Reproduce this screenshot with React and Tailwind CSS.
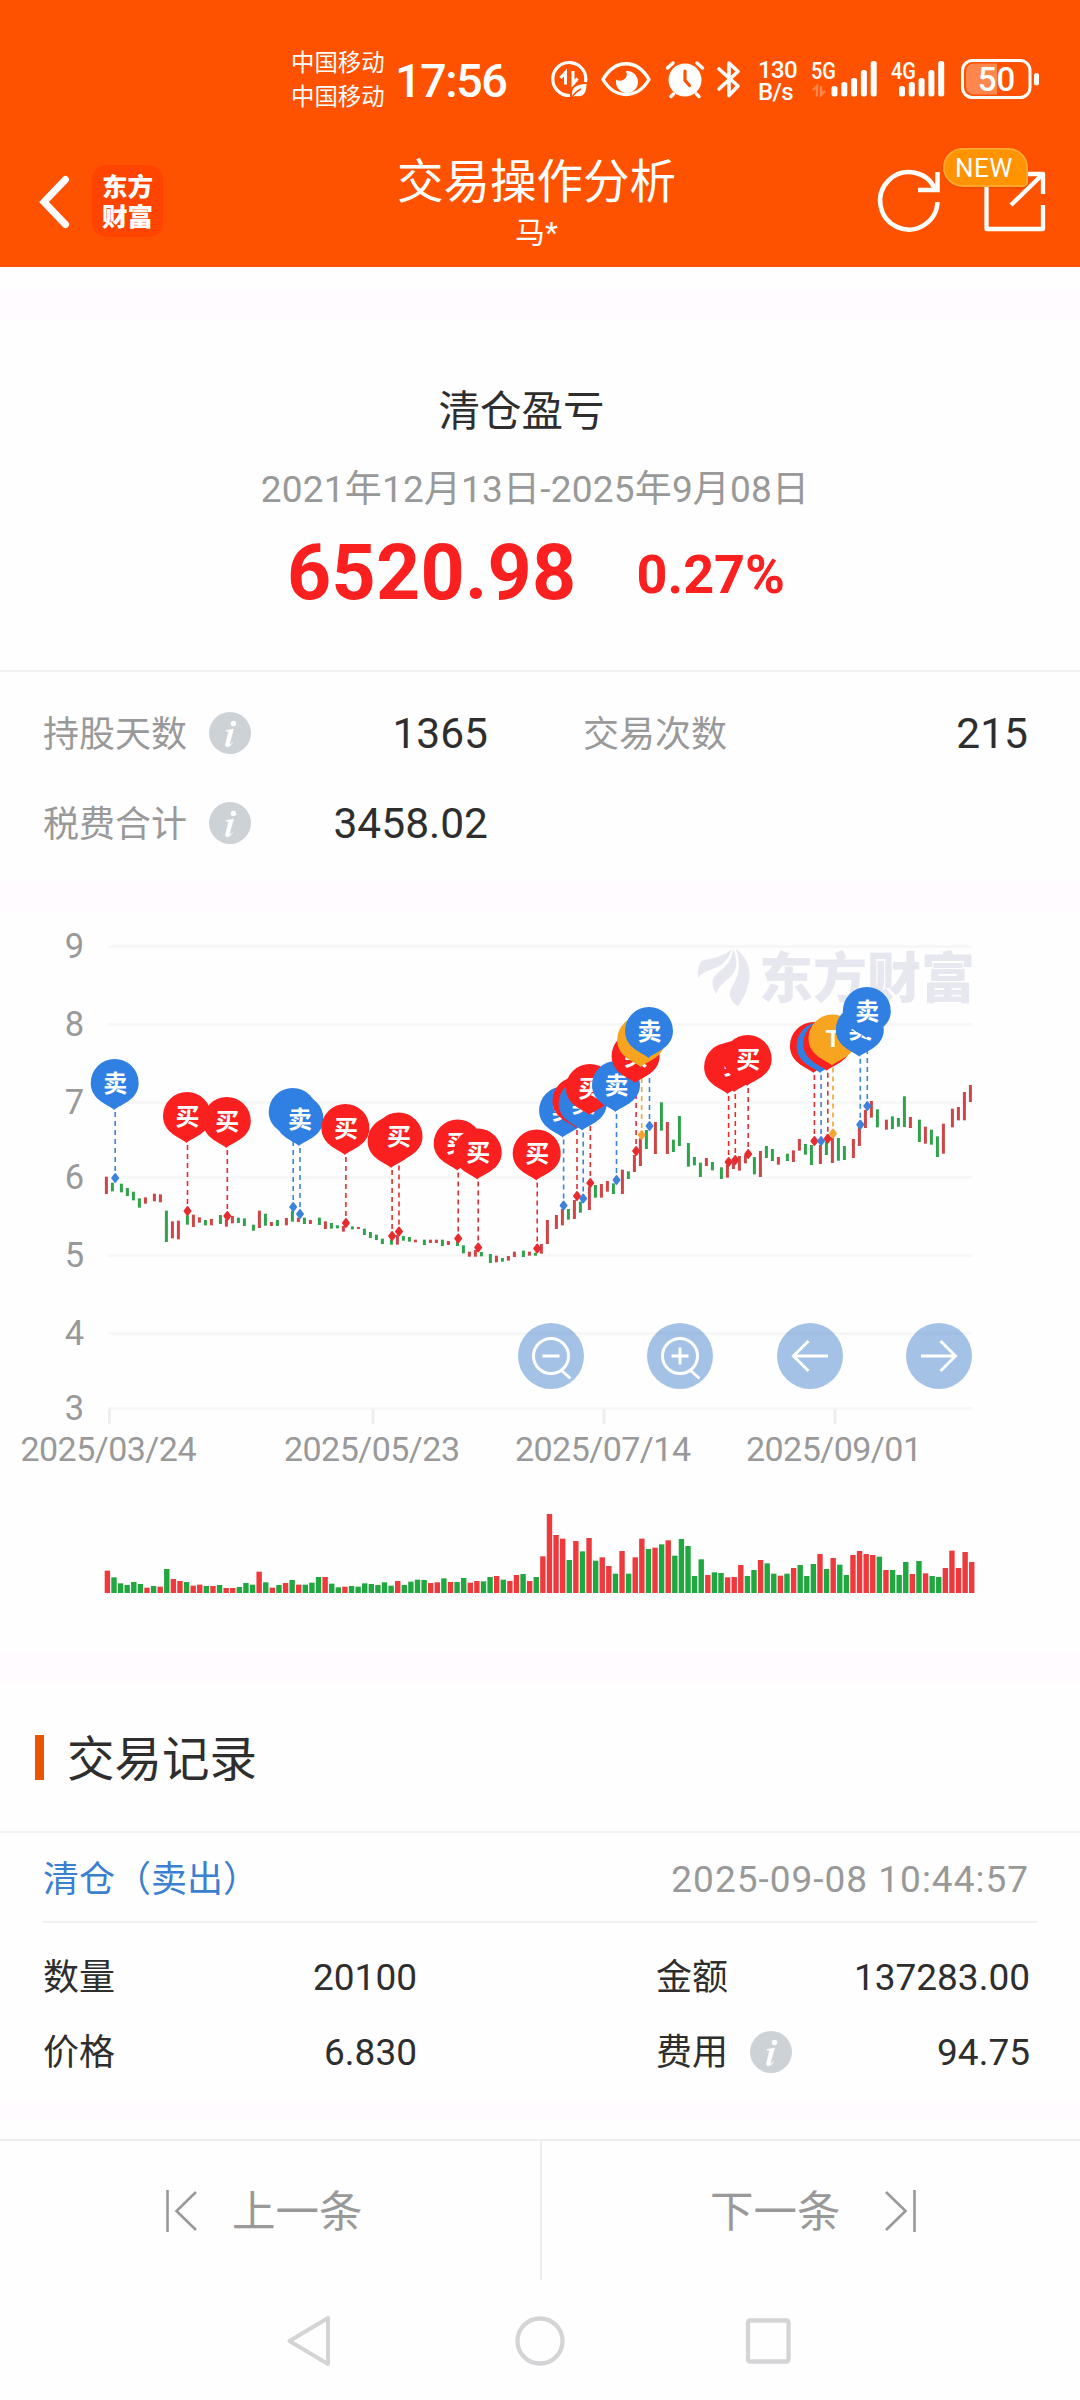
import React from "react";

// candle body [top, bottom] in chart units (1/3 px), "r" = up, "g" = down
const candles = [
  ["r", 830, 882], ["g", 848, 874], ["g", 851, 877], ["g", 864, 888], ["g", 875, 901],
  ["g", 895, 923], ["r", 892, 911], ["r", 881, 904], ["r", 883, 907], ["g", 932, 1026],
  ["r", 964, 1015], ["r", 962, 1018], ["g", 946, 974], ["r", 944, 981], ["r", 952, 968],
  ["g", 960, 976], ["r", 957, 976], ["g", 945, 972], ["r", 958, 980], ["r", 948, 970],
  ["g", 953, 969], ["g", 955, 978], ["g", 974, 992], ["r", 932, 984], ["g", 941, 977],
  ["r", 966, 978], ["g", 960, 978], ["r", 954, 976], ["g", 933, 965], ["r", 953, 966],
  ["g", 953, 972], ["r", 960, 972], ["g", 953, 975], ["r", 964, 987], ["g", 969, 986],
  ["g", 976, 985], ["r", 978, 995], ["g", 979, 988], ["r", 981, 987], ["g", 986, 1005],
  ["g", 996, 1014], ["g", 1004, 1020], ["g", 1016, 1032], ["g", 1018, 1034], ["r", 1005, 1034],
  ["g", 1008, 1022], ["g", 1011, 1025], ["r", 1019, 1027], ["g", 1019, 1035], ["r", 1019, 1029],
  ["r", 1019, 1029], ["g", 1019, 1038], ["r", 1023, 1035], ["g", 1025, 1038], ["g", 1036, 1060],
  ["r", 1055, 1070], ["r", 1050, 1070], ["g", 1056, 1069], ["g", 1062, 1089], ["r", 1067, 1087],
  ["g", 1074, 1085], ["r", 1068, 1082], ["r", 1055, 1071], ["g", 1052, 1071], ["r", 1055, 1067],
  ["g", 1058, 1067], ["r", 1032, 1061], ["r", 960, 1032], ["r", 945, 987], ["r", 927, 976],
  ["g", 927, 959], ["r", 900, 957], ["g", 905, 938], ["r", 860, 930], ["g", 855, 893],
  ["r", 852, 893], ["r", 843, 875], ["g", 850, 882], ["r", 809, 882], ["g", 814, 837],
  ["r", 765, 816], ["r", 715, 798], ["g", 690, 747], ["r", 666, 762], ["g", 607, 692],
  ["r", 666, 762], ["g", 719, 756], ["g", 648, 738], ["g", 729, 800], ["g", 771, 796],
  ["g", 788, 831], ["r", 774, 798], ["g", 786, 811], ["g", 802, 837], ["r", 795, 833],
  ["r", 785, 807], ["r", 768, 812], ["r", 765, 790], ["g", 771, 823], ["r", 753, 831],
  ["g", 738, 774], ["g", 747, 783], ["r", 771, 794], ["g", 761, 783], ["r", 751, 786],
  ["r", 717, 752], ["g", 732, 764], ["g", 735, 795], ["r", 735, 792], ["g", 725, 765],
  ["r", 712, 789], ["g", 714, 782], ["g", 738, 780], ["r", 717, 774], ["r", 680, 738],
  ["r", 630, 684], ["r", 603, 653], ["g", 628, 682], ["r", 659, 689], ["g", 649, 687],
  ["g", 654, 680], ["g", 589, 681], ["r", 651, 684], ["g", 659, 726], ["r", 680, 731],
  ["g", 689, 734], ["g", 709, 771], ["r", 671, 761], ["r", 626, 682], ["r", 621, 661],
  ["r", 576, 661], ["r", 555, 606],
];

// positive = up day, negative = down day
const volumes = [
  67, -47, -29, -24, -33, -27, 16, -21, 19, -72, 42, 36, -33, 22, 25, -21, 21, -24, 15, 15,
  -18, -30, -25, 64, -32, 16, -24, 30, -39, 25, -25, -31, -48, 48, -28, -17, 19, -21, -19, -29,
  -27, -24, -32, -22, 36, -24, -34, -40, -39, 30, 32, -44, 33, -33, -45, 31, 36, -35, -48, 51,
  -40, 36, 54, -57, 36, -48, 110, 237, 174, 163, -99, 156, -125, 165, -97, 107, 81, -58, 126, -58,
  107, 163, -132, 136, -146, 158, -112, -162, -141, -51, -101, 54, -62, -60, 47, 48, 84, -51, -69, 99,
  -89, -58, 52, -58, 75, -84, -51, -87, 117, -72, 105, -85, -54, 114, 126, 117, 114, -109, 69, -69,
  -54, -93, 57, -96, 59, -51, -48, 75, 127, 75, 123, 93,
];

// [kind, x, y of the dot]
const trades = [
  ["卖", 115.2, 1178], ["买", 187.5, 1211], ["买", 227.3, 1216], ["卖", 293.2, 1207],
  ["卖", 300, 1214], ["买", 345.9, 1223], ["买", 392.1, 1236], ["买", 399, 1231.5],
  ["买", 458.2, 1238.5], ["买", 478.2, 1247.5], ["买", 537.2, 1248.5], ["卖", 563.6, 1205.5],
  ["买", 577, 1196], ["卖", 583.2, 1198.5], ["买", 590.3, 1183], ["卖", 616.5, 1180],
  ["买", 636.1, 1151], ["T", 641.7, 1135], ["卖", 649.5, 1126], ["买", 728.6, 1162],
  ["买", 735.3, 1160], ["买", 748.2, 1154], ["买", 814.4, 1141], ["卖", 821.1, 1141],
  ["买", 827.8, 1138.7], ["T", 833, 1133.5], ["卖", 860.3, 1124.7], ["卖", 867.3, 1106],
];

const tradeColors = { 买: "#fa2020", 卖: "#3080e3", T: "#f7a521" };
const dotColors = { 买: "#e62c2e", 卖: "#3d83dc", T: "#f2a531" };

const gridLines = [
  [9, 946.5], [8, 1024.5], [7, 1102.5], [6, 1177.5], [5, 1255.5], [4, 1333.5], [3, 1408.5],
];

const dates = [
  ["2025/03/24", 108.5], ["2025/05/23", 372], ["2025/07/14", 603], ["2025/09/01", 834],
];

const Signal = ({ label, faint }) => (
  <svg viewBox="0 0 66 40" className="w-[66px] h-10" fill="#fff">
    <text x="0" y="19.5" fontSize="23" fontWeight="500" textLength="25" lengthAdjust="spacingAndGlyphs">
      {label}
    </text>
    {faint && (
      <path d="M2 31l4-4v10.500M10 27v9l4-4" stroke="#fff" strokeWidth="2.400" fill="none" opacity=".3" />
    )}
    {[26, 22, 18, 10, 1].map((y, i) => (
      <rect key={y} x={(faint ? 20.5 : 8) + i * 9.8} y={y + 1} width="6" height={36.5 - y} rx="2.500" />
    ))}
  </svg>
);

const StatusBar = () => (
  <div className="flex items-start h-[140px] pt-[59px] pl-[291px] text-white">
    <div className="w-[94px] -mt-[13px] text-[23.4px] leading-[34px] whitespace-nowrap">
      <div>中国移动</div>
      <div>中国移动</div>
    </div>
    <div className="w-[120px] ml-[10px] mt-px text-[47px] leading-[42px] font-medium tracking-[-1.6px]">17:56</div>
    <svg viewBox="0 0 40 40" className="w-10 h-10 ml-[35px]" fill="none" stroke="#fff" strokeWidth="3.200">
      <path d="M20 36.500A16.500 16.500 0 1 1 35.500 23" />
      <path d="M10.500 19l5-5.500v12M27.500 19.500l-4 5-.5.500V12" strokeWidth="3" />
      <path d="M22.500 38c-2-9 3-12.500 14-13 0 9-3 13.500-11 12z" fill="#fff" stroke="none" />
      <path d="M22 38.500c2-4 5-6.500 9-8.500" strokeWidth="1.500" stroke="#ff5200" />
    </svg>
    <svg viewBox="0 0 50 40" className="w-[50px] h-10 ml-[11px]" fill="none">
      <circle cx="26" cy="23" r="11" fill="#fff" />
      <circle cx="19" cy="15" r="6.800" fill="#ff5200" />
      <path d="M2 20.500C14-.5 36-.5 48 20.500 36 40.500 14 40.500 2 20.500z" stroke="#fff" strokeWidth="3.400" strokeLinejoin="round" />
    </svg>
    <svg viewBox="0 0 40 40" className="w-10 h-10 ml-[14px]" fill="none" stroke="#fff" strokeLinecap="round">
      <circle cx="20" cy="21" r="16.500" fill="#fff" stroke="none" />
      <path d="M2.500 9L8 4M37.500 9L32 4M8.500 35L6 37.500M31.500 35l2.500 2.500" strokeWidth="3.500" />
      <path d="M20 12v9.500l4.500 5" stroke="#ff5200" strokeWidth="3.200" />
    </svg>
    <svg viewBox="0 0 26 40" className="w-[26px] h-10 ml-[11px]" fill="none" stroke="#fff" strokeWidth="3.600" strokeLinejoin="round" strokeLinecap="round">
      <path d="M3 10l19 17-9 9.500V4l9 8.500L3 30" />
    </svg>
    <div className="w-[40px] ml-[16px] text-[24px] leading-[22px] font-medium tracking-[-0.6px]">
      <div>130</div>
      <div>B/s</div>
    </div>
    <div className="ml-[13px]">
      <Signal label="5G" faint />
    </div>
    <div className="ml-[14px]">
      <Signal label="4G" />
    </div>
    <svg viewBox="0 0 80 40" className="w-20 h-10 ml-[4px]" fill="#fff">
      <rect x="1.500" y="1.500" width="67.500" height="37" rx="10" fill="none" stroke="#fff" strokeWidth="3" />
      <path d="M36 4.500H13c-5 0-8 3-8 8v15c0 5 3 8 8 8h23z" opacity=".3" />
      <rect x="73" y="14" width="5" height="12.500" rx="2.500" />
      <text x="35.500" y="32" fontSize="33" fontWeight="500" textAnchor="middle">50</text>
    </svg>
  </div>
);

const TitleBar = () => (
  <div className="relative flex h-[127px] pl-[36px] text-white">
    <div className="flex w-[350px] pt-[25px]">
      <svg viewBox="0 0 40 72" className="w-10 h-[72px]" fill="none" stroke="#fff" strokeWidth="7" strokeLinecap="round" strokeLinejoin="miter">
        <path d="M29.500 14.500L8 37l21.500 22.500" />
      </svg>
      <div className="w-[71px] h-[72px] ml-[16px] pt-[7px] rounded-[14px] bg-[#ff4400] text-center text-[25.500px] leading-[30px] font-black">
        <div>东方</div>
        <div>财富</div>
      </div>
    </div>
    <div className="w-[301px] text-center whitespace-nowrap">
      <div className="mt-[14px] text-[46.500px] leading-[56px]">交易操作分析</div>
      <div className="mt-[5px] text-[30px] leading-[36px]">马*</div>
    </div>
    <div className="relative flex ml-[188px] pt-[26px]">
      <svg viewBox="0 0 68 70" className="w-[68px] h-[70px]" fill="none" stroke="#fff" strokeWidth="4.500">
        <path d="M62.500 36A28.700 28.700 0 1 1 60 23" />
        <path d="M43 24h19.500V6" />
      </svg>
      <svg viewBox="0 0 68 70" className="w-[68px] h-[70px] ml-[35px]" fill="none" stroke="#fff" strokeWidth="4.300" strokeLinejoin="round">
        <path d="M65 28V8H8.500v55H65V39M65 8L33 39" />
      </svg>
      <div className="absolute left-[68px] top-[8px] w-[85px] h-[39px] rounded-[20px] rounded-br-[5px] border-2 border-[#ffa62e] bg-[#ff9300] pr-[3px] text-center text-[26px] leading-[36px] tracking-[0.5px] shadow-sm">
        NEW
      </div>
    </div>
  </div>
);

const InfoIcon = () => (
  <svg viewBox="0 0 42 42" className="w-[42px] h-[42px] ml-[22px]">
    <circle cx="21" cy="21" r="21" fill="#cdd2d6" />
    <circle cx="24.500" cy="11.500" r="2.700" fill="#fff" />
    <path d="M17 18.500c3-.5 5-1 7.500-1.500l-4 14.500c-.5 2 1 1.500 3-1 -2 4.500-7.500 6-7 2l3-12c.3-1.500-1-1.300-2.500-1.300z" fill="#fff" stroke="#fff" strokeWidth=".6" />
  </svg>
);

const Stat = ({ label, value, info, className }) => (
  <div className={`flex items-center h-[60px] ${className}`}>
    <span className="pt-1 text-[36px] text-[#999]">{label}</span>
    {info && <InfoIcon />}
    <span className="ml-auto pt-px text-[42.500px]">{value}</span>
  </div>
);

const Field = ({ label, value, info, className }) => (
  <div className={`flex items-center h-[60px] text-[36px] ${className}`}>
    <span className="pt-[2px]">{label}</span>
    {info && <InfoIcon />}
    <span className="ml-auto pt-[2px] text-[37px]">{value}</span>
  </div>
);

const Pin = ({ kind, x, y }) => (
  <g transform={`translate(${x} ${y})`}>
    <path d="M-1 51C-5 46-24.500 42-24.500 24A24 24 0 0 1 23.500 24C23.500 42 3 46-1 51z" fill={tradeColors[kind]} />
    <text y="32.500" fontSize="24" fontWeight="700" fill="#fff" textAnchor="middle">
      {kind}
    </text>
  </g>
);

const RoundButton = ({ x, children }) => (
  <g transform={`translate(${x} 1356)`} fill="none" stroke="#fff" strokeWidth="3">
    <circle r="33" fill="#2d73c8" fillOpacity=".43" stroke="none" />
    {children}
  </g>
);

const Chart = () => (
  <svg viewBox="0 912 1080 740" className="w-[1080px] h-[740px]">
    {gridLines.map(([value, y]) => (
      <g key={value}>
        <rect x="108" y={y - 1.5} width="864" height="3" fill="#f7f7f7" />
        <text x="74.500" y={y + 11} fontSize="34.500" fill="#999" textAnchor="middle">
          {value}
        </text>
      </g>
    ))}
    {dates.map(([date, x]) => (
      <g key={date}>
        <rect x={x - 0.5} y="1409" width="3" height="15" fill="#eee" />
        <text x={x} y="1461" fontSize="34" fill="#999" textAnchor="middle" textLength="176">
          {date}
        </text>
      </g>
    ))}

    <g fill="#e7e7ef">
      <path d="M698 978c-1-9 1-16 6-18 12-2 22-5 28-11-4 11-9 16-17 19-7 3-13 4-17 10z" />
      <path d="M716 994c-5-10-5-16 3-22 9-7 13-13 14-23 6 14 4 22-4 29-6 5-11 9-13 16z" />
      <path d="M738 1006c-8-5-11-12-5-21 6-10 8-21 3-36 12 9 16 22 12 36-2 9-6 15-10 21z" />
      <text x="759" y="998" fontSize="54" fontWeight="900" textLength="216">
        东方财富
      </text>
    </g>

    {candles.map(([dir, top, bottom], i) => (
      <rect
        key={i}
        x={104.9 + 3 * Math.floor(i * 2.1987 + 0.65)}
        y={900 + top / 3}
        width="3"
        height={(bottom - top) / 3}
        fill={dir === "r" ? "#cf4548" : "#2fa24c"}
      />
    ))}

    {trades.map(([kind, x, y], i) => (
      <g key={i} fill={dotColors[kind]} stroke={dotColors[kind]}>
        <path d={`M${x} ${y - 66}V${y}`} strokeWidth="1.600" strokeDasharray="5 4" />
        <path d={`M${x} ${y - 4}l3 4-3 4-3-4z`} strokeWidth="2" strokeLinejoin="round" />
      </g>
    ))}
    {trades.map(([kind, x, y], i) => (
      <Pin key={i} kind={kind} x={x} y={y - 119} />
    ))}

    <RoundButton x={551}>
      <circle r="17.500" />
      <path d="M-8.500 0h17M10.500 14.500l9 8" />
    </RoundButton>
    <RoundButton x={680}>
      <circle r="17.500" />
      <path d="M-8.500 0h17M0-8.500v17M10.500 14.500l9 8" />
    </RoundButton>
    <RoundButton x={810}>
      <path d="M18 0h-34M-1.500-15L-16.500 0l15 15" />
    </RoundButton>
    <RoundButton x={939}>
      <path d="M-18 0h34M1.500-15L16.500 0l-15 15" />
    </RoundButton>

    {volumes.map((v, i) => (
      <rect
        key={i}
        x={104.7 + i * 6.598}
        y={1593 - Math.abs(v) / 3}
        width="5.400"
        height={Math.abs(v) / 3}
        fill={v > 0 ? "#ee3a3c" : "#21a73f"}
      />
    ))}
  </svg>
);

const App = () => {
  return (
    <div className="flex flex-col w-[1080px] h-[2400px] overflow-hidden bg-[#fefefe] text-[#2e2e2e] font-[Roboto,'Noto_Sans_CJK_SC',sans-serif]">
      <header className="h-[267px] bg-[#ff5200]">
        <StatusBar />
        <TitleBar />
      </header>
      <div className="h-[31px] mt-[23px] bg-[#fffbff]" />

      <section className="h-[351px] pt-[61px] border-b-2 border-[#f1f1f1] text-center">
        <div className="h-[60px] pr-[37px] text-[41.500px] leading-[60px]">清仓盈亏</div>
        <div className="h-[60px] mt-[18px] pr-[10px] text-[37px] leading-[60px] tracking-[0.2px] text-[#999]">
          2021年12月13日-2025年9月08日
        </div>
        <div className="flex justify-center items-center h-[80px] mt-[14px] pr-[8px] font-bold text-[#fa2020]">
          <span className="text-[77px] tracking-[0.3px]">6520.98</span>
          <span className="ml-[60px] text-[54px]">0.27%</span>
        </div>
      </section>

      <section className="h-[210px] pt-[31px] pl-[43px]">
        <div className="flex">
          <Stat className="w-[445px]" label="持股天数" value="1365" info />
          <Stat className="w-[445px] ml-[95px]" label="交易次数" value="215" />
        </div>
        <div className="flex mt-[30px]">
          <Stat className="w-[445px]" label="税费合计" value="3458.02" info />
        </div>
      </section>
      <div className="h-[30px] bg-[#fffbff]" />

      <Chart />
      <div className="h-[31px] bg-[#fffbff]" />

      <section className="h-[150px] flex items-center pl-[35px] border-b-2 border-[#f1f1f1]">
        <div className="w-[9px] h-[45px] bg-[#ea5504]" />
        <h2 className="ml-[23px] pt-[7px] text-[47.500px]">交易记录</h2>
      </section>
      <section className="h-[269px]">
        <div className="flex items-center justify-between h-[90px] mx-[43px] pt-[5px] pr-[8px] border-b-2 border-[#f1f1f1] text-[36px]">
          <span className="text-[#3a7fd0]">清仓（卖出）</span>
          <span className="text-[37px] tracking-[1px] text-[#999]">2025-09-08 10:44:57</span>
        </div>
        <div className="flex mt-[24px] ml-[43px]">
          <Field className="w-[374px]" label="数量" value="20100" />
          <Field className="w-[374px] ml-[239px]" label="金额" value="137283.00" />
        </div>
        <div className="flex mt-[15px] ml-[43px]">
          <Field className="w-[374px]" label="价格" value="6.830" />
          <Field className="w-[374px] ml-[239px]" label="费用" value="94.75" info />
        </div>
      </section>
      <div className="h-[18px] bg-[#fffbff]" />

      <div className="flex h-[141px] mt-[19px] border-t-2 border-[#eee] text-[43.500px] text-[#999]">
        <button className="flex items-center w-[542px] pl-[164px] border-r-2 border-[#eee]">
          <svg viewBox="0 0 36 44" className="w-9 h-11" fill="none" stroke="#999" strokeWidth="2.600">
            <path d="M3.500 1v42M32 3L12.500 22 32 41" />
          </svg>
          <span className="ml-[32px] pt-1">上一条</span>
        </button>
        <button className="flex items-center flex-1 pl-[168px]">
          <span className="pt-1">下一条</span>
          <svg viewBox="0 0 36 44" className="w-9 h-11 ml-[41px]" fill="none" stroke="#999" strokeWidth="2.600">
            <path d="M32.500 1v42M4 3l19.500 19L4 41" />
          </svg>
        </button>
      </div>

      <nav className="flex items-center h-[120px] pt-px pl-[284px]">
        <svg viewBox="0 0 50 54" className="w-[50px] h-[54px]" fill="none" stroke="#d5d3d6" strokeWidth="4" strokeLinejoin="round">
          <path d="M44 4v46L5.500 27z" />
        </svg>
        <svg viewBox="0 0 54 54" className="w-[54px] h-[54px] ml-[179px]" fill="none" stroke="#d5d3d6" strokeWidth="4.300">
          <circle cx="27" cy="27" r="22.500" />
        </svg>
        <svg viewBox="0 0 50 50" className="w-[50px] h-[50px] ml-[176px]" fill="none" stroke="#d5d3d6" strokeWidth="4.300">
          <rect x="5" y="4.500" width="40.500" height="41" rx="2" />
        </svg>
      </nav>
    </div>
  );
};

export default App;
